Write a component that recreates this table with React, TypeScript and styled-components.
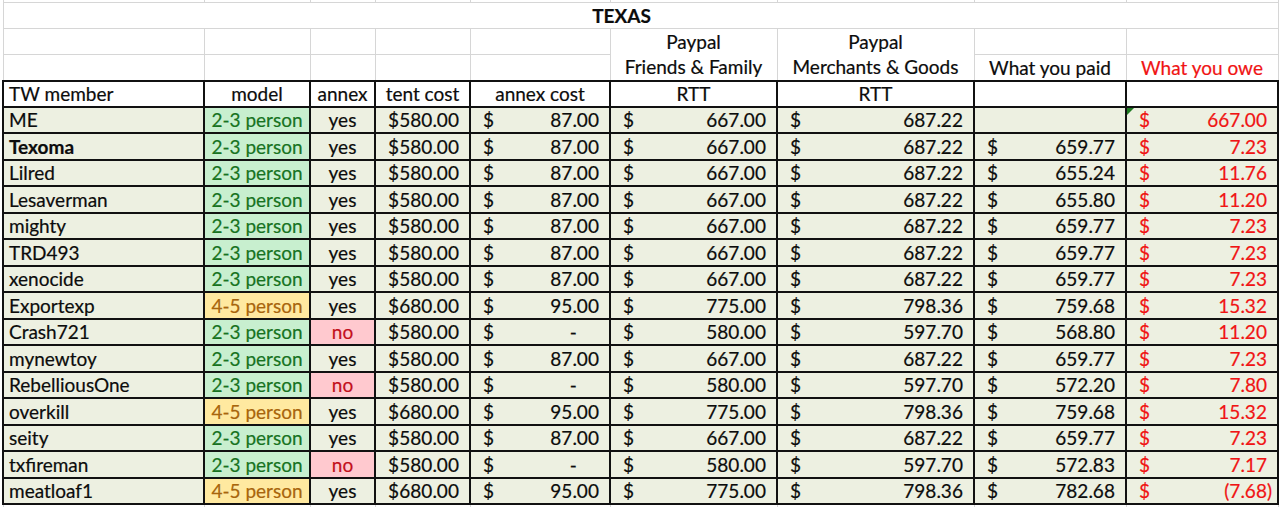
import React from "react";
import styled, { createGlobalStyle, css } from "styled-components";

const GlobalStyle = createGlobalStyle`
  body {
    margin: 0;
    background: #fff;
    font-family: Lato, "Liberation Sans", sans-serif;
  }
`;

const Sheet = styled.table`
  table-layout: fixed;
  border-collapse: collapse;
  margin-left: 2px;
  width: 1275px;
  font-size: 19px;
  color: #0c0c0c;
  -webkit-text-stroke: 0.2px currentColor;
`;

const Row = styled.tr<{ $h: number }>`
  height: ${(p) => p.$h}px;
`;

const Stub = styled.td`
  border-left: 1px solid #d6d6d6;
  border-right: 1px solid #d6d6d6;
  padding: 0;
  font-size: 0;
  line-height: 0;
`;

const Grid = styled.td<{ $red?: boolean }>`
  border: 1px solid #d6d6d6;
  padding: 0 5px;
  line-height: 25px;
  text-align: center;
  white-space: nowrap;
  color: ${(p) => (p.$red ? "#f01414" : "#0c0c0c")};
`;

const Title = styled(Grid)`
  font-weight: bold;
  padding-right: 43px;
`;

const Head = styled.td<{ $left?: boolean }>`
  border: 2px solid #111;
  background: #fff;
  padding: 1px 5px 0;
  line-height: 22px;
  text-align: ${(p) => (p.$left ? "left" : "center")};
  white-space: nowrap;
`;

type Tone = "green" | "yellow" | "pink";

const tones: Record<Tone, { bg: string; fg: string }> = {
  green: { bg: "#c8efcf", fg: "#17731f" },
  yellow: { bg: "#ffe9a0", fg: "#a8650c" },
  pink: { bg: "#ffc9cf", fg: "#c3101c" },
};

const Cell = styled.td<{ $tone?: Tone; $center?: boolean; $bold?: boolean; $red?: boolean }>`
  position: relative;
  border: 2px solid #111;
  background: #edf0e1;
  padding: 1px 5px 0;
  line-height: 22px;
  white-space: nowrap;
  text-align: ${(p) => (p.$center ? "center" : "left")};
  font-weight: ${(p) => (p.$bold ? "bold" : "normal")};
  color: ${(p) => (p.$red ? "#f01414" : "#0c0c0c")};
  ${(p) =>
    p.$tone &&
    css`
      background: ${tones[p.$tone].bg};
      color: ${tones[p.$tone].fg};
    `}
`;

const Money = styled.div`
  display: flex;
  justify-content: space-between;
  padding-left: 7px;
`;

const Ghost = styled.span`
  visibility: hidden;
`;

const Flag = styled.span`
  position: absolute;
  top: 0;
  left: 0;
  border-top: 7px solid #1f7a22;
  border-right: 7px solid transparent;
`;

type Member = {
  name: string;
  big?: boolean;
  annex: boolean;
  paid?: string;
  owe: string;
  bold?: boolean;
  flag?: boolean;
};

const members: Member[] = [
  { name: "ME", annex: true, owe: "667.00", flag: true },
  { name: "Texoma", annex: true, paid: "659.77", owe: "7.23", bold: true },
  { name: "Lilred", annex: true, paid: "655.24", owe: "11.76" },
  { name: "Lesaverman", annex: true, paid: "655.80", owe: "11.20" },
  { name: "mighty", annex: true, paid: "659.77", owe: "7.23" },
  { name: "TRD493", annex: true, paid: "659.77", owe: "7.23" },
  { name: "xenocide", annex: true, paid: "659.77", owe: "7.23" },
  { name: "Exportexp", big: true, annex: true, paid: "759.68", owe: "15.32" },
  { name: "Crash721", annex: false, paid: "568.80", owe: "11.20" },
  { name: "mynewtoy", annex: true, paid: "659.77", owe: "7.23" },
  { name: "RebelliousOne", annex: false, paid: "572.20", owe: "7.80" },
  { name: "overkill", big: true, annex: true, paid: "759.68", owe: "15.32" },
  { name: "seity", annex: true, paid: "659.77", owe: "7.23" },
  { name: "txfireman", annex: false, paid: "572.83", owe: "7.17" },
  { name: "meatloaf1", big: true, annex: true, paid: "782.68", owe: "(7.68)" },
];

const Amount: React.FC<{ value: string }> = ({ value }) => {
  if (value === "-")
    return (
      <span>
        -<Ghost>00)</Ghost>
      </span>
    );
  if (value.startsWith("(")) return <span>{value}</span>;
  return (
    <span>
      {value}
      <Ghost>)</Ghost>
    </span>
  );
};

const Dollars: React.FC<{ value: string }> = ({ value }) => (
  <Money>
    <span>$</span>
    <Amount value={value} />
  </Money>
);

const widths = [201, 106, 65, 95, 140, 167, 197, 152, 152];

const App: React.FC = () => {
  return (
    <>
      <GlobalStyle />
      <Sheet>
        <colgroup>
          {widths.map((w, i) => (
            <col key={i} style={{ width: w }} />
          ))}
        </colgroup>
        <tbody>
          <Row $h={2}>
            {widths.map((_, i) => (
              <Stub key={i} />
            ))}
          </Row>
          <Row $h={26}>
            <Title colSpan={9}>TEXAS</Title>
          </Row>
          <Row $h={26}>
            <Grid />
            <Grid />
            <Grid />
            <Grid />
            <Grid />
            <Grid rowSpan={2}>
              Paypal
              <br />
              Friends &amp; Family
            </Grid>
            <Grid rowSpan={2}>
              Paypal
              <br />
              Merchants &amp; Goods
            </Grid>
            <Grid />
            <Grid />
          </Row>
          <Row $h={26}>
            <Grid />
            <Grid />
            <Grid />
            <Grid />
            <Grid />
            <Grid>What you paid</Grid>
            <Grid $red>What you owe</Grid>
          </Row>
          <Row $h={26}>
            <Head $left>TW member</Head>
            <Head>model</Head>
            <Head>annex</Head>
            <Head>tent cost</Head>
            <Head>annex cost</Head>
            <Head>RTT</Head>
            <Head>RTT</Head>
            <Head />
            <Head />
          </Row>
          {members.map((m) => {
            const tent = m.big ? "680.00" : "580.00";
            const annex = !m.annex ? "-" : m.big ? "95.00" : "87.00";
            const ff = !m.annex ? "580.00" : m.big ? "775.00" : "667.00";
            const mg = !m.annex ? "597.70" : m.big ? "798.36" : "687.22";
            return (
              <Row $h={26.5} key={m.name}>
                <Cell $bold={m.bold}>{m.name}</Cell>
                <Cell $center $tone={m.big ? "yellow" : "green"}>
                  {m.big ? "4-5 person" : "2-3 person"}
                </Cell>
                <Cell $center $tone={m.annex ? undefined : "pink"}>
                  {m.annex ? "yes" : "no"}
                </Cell>
                <Cell>
                  <Dollars value={tent} />
                </Cell>
                <Cell>
                  <Dollars value={annex} />
                </Cell>
                <Cell>
                  <Dollars value={ff} />
                </Cell>
                <Cell>
                  <Dollars value={mg} />
                </Cell>
                <Cell>{m.paid && <Dollars value={m.paid} />}</Cell>
                <Cell $red>
                  {m.flag && <Flag />}
                  <Dollars value={m.owe} />
                </Cell>
              </Row>
            );
          })}
          <Row $h={8}>
            {widths.map((_, i) => (
              <Stub key={i} />
            ))}
          </Row>
        </tbody>
      </Sheet>
    </>
  );
};

export default App;
